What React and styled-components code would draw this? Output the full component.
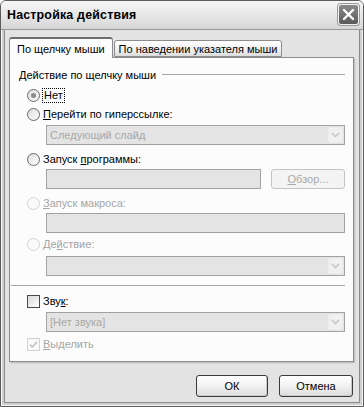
import React from "react";
import styled, { createGlobalStyle } from "styled-components";

const Global = createGlobalStyle`
  html, body { margin: 0; padding: 0; background: #fff; }
  body { font-family: "Liberation Sans", Arial, sans-serif; font-size: 11px; color: #000; }
`;

const Window = styled.div`
  width: 364px;
  height: 407px;
  box-sizing: border-box;
  border: 1px solid #5c5c5c;
  border-radius: 6px 6px 0 0;
  background: #e3e3e3;
  box-shadow: inset 0 0 0 1px #f4f4f4, inset 0 0 0 3px #cfcfcf, inset 0 0 0 4px #8a8a8a;
  display: flex;
  flex-direction: column;
  overflow: hidden;
`;

const TitleBar = styled.div`
  height: 28px;
  flex: none;
  display: flex;
  align-items: center;
  justify-content: space-between;
  padding: 0 4px 0 6px;
  background: linear-gradient(#f6f6f6, #e4e4e4 60%, #d6d6d6);
  border-bottom: 1px solid #9a9a9a;
`;

const Title = styled.div`
  font-weight: bold;
  font-size: 12.4px;
  letter-spacing: 0.2px;
`;

const CloseBox = styled.div`
  width: 21px;
  height: 21px;
  box-sizing: border-box;
  border-radius: 3px;
  border: 1px solid #f0f0f0;
  background: linear-gradient(#8a8a8a, #5a5a5a);
  box-shadow: 0 0 0 1px #9a9a9a;
  display: flex;
  align-items: center;
  justify-content: center;
  margin-top: -2px;
`;

const Body = styled.div`
  flex: 1;
  display: flex;
  flex-direction: column;
  padding: 7px 8px 0 8px;
`;

const Tabs = styled.div`
  display: flex;
  align-items: flex-end;
  height: 20px;
  position: relative;
  z-index: 1;
`;

const Tab = styled.div`
  box-sizing: border-box;
  height: ${p => (p.$active ? "21px" : "17px")};
  margin-bottom: ${p => (p.$active ? "-1px" : "0")};
  padding: 0 ${p => (p.$active ? "7px" : "4px")};
  display: flex;
  align-items: center;
  border: 1px solid #8c8c8c;
  border-bottom: ${p => (p.$active ? "none" : "1px solid #8c8c8c")};
  border-radius: 3px 3px 0 0;
  background: ${p => (p.$active ? "#fcfcfc" : "linear-gradient(#ffffff, #ececec 70%, #dcdcdc)")};
  border-top: ${p => (p.$active ? "2px solid #6e6e6e" : "1px solid #8c8c8c")};
  margin-left: ${p => (p.$active ? "0" : "1px")};
  white-space: nowrap;
`;

const Panel = styled.div`
  box-sizing: border-box;
  height: 305px;
  width: 345px;
  background: #fcfcfc;
  border: 1px solid #8c8c8c;
  box-shadow: 1px 1px 0 #c4c4c4, 2px 2px 0 #d6d6d6;
  padding: 8px 8px 0 9px;
  display: flex;
  flex-direction: column;
`;

const GroupHead = styled.div`
  height: 18px;
  display: flex;
  align-items: center;
  gap: 6px;
  &::after {
    content: "";
    flex: 1;
    height: 1px;
    background: #a6a6a6;
    margin-top: -1px;
  }
`;

const OptionRow = styled.label`
  height: 18px;
  margin-top: ${p => p.$mt || 0}px;
  padding-left: 8px;
  display: flex;
  align-items: center;
  gap: 3px;
  color: ${p => (p.$disabled ? "#a5a5a5" : "#000")};
`;

const Focus = styled.span`
  outline: 1px dotted #000;
  outline-offset: 0;
  padding: 0 1px;
  line-height: 13px;
`;

const FieldRow = styled.div`
  display: flex;
  margin-top: ${p => p.$mt || 0}px;
  padding-left: 27px;
  gap: 11px;
`;

const Field = styled.div`
  box-sizing: border-box;
  height: 20px;
  flex: 1;
  border: 1px solid #a2a2a2;
  background: #e4e4e4;
  display: flex;
  align-items: center;
  justify-content: space-between;
  padding: 0 1px 0 3px;
  color: #a8a8a8;
`;

const DropBtn = styled.div`
  width: 15px;
  height: 16px;
  box-sizing: border-box;
  border: 1px solid #ececec;
  border-radius: 2px;
  background: #f0f0f0;
  display: flex;
  align-items: center;
  justify-content: center;
`;

const BrowseBtn = styled.div`
  box-sizing: border-box;
  width: 74px;
  height: 20px;
  margin-left: -1px;
  border: 1px solid #c4c4c4;
  border-radius: 3px;
  background: #f4f4f4;
  color: #a8a8a8;
  display: flex;
  align-items: center;
  justify-content: center;
`;

const Separator = styled.div`
  height: 1px;
  background: #a6a6a6;
  margin-top: ${p => p.$mt || 0}px;
  margin-left: -8px;
`;

const Footer = styled.div`
  flex: 1;
  display: flex;
  justify-content: flex-end;
  align-items: flex-start;
  padding: 13px 2px 0 0;
  gap: 11px;
`;

const Button = styled.div`
  box-sizing: border-box;
  width: ${p => p.$w}px;
  height: 22px;
  border: 1px solid #3a3a3a;
  border-radius: 3px;
  background: linear-gradient(#ffffff, #f2f2f2 50%, #dcdcdc);
  box-shadow: inset -1px -1px 0 #c8c8c8;
  display: flex;
  align-items: center;
  justify-content: center;
`;

const U = styled.span`
  text-decoration: underline;
  text-underline-offset: 1px;
`;

function Radio({ checked, disabled }) {
  const stroke = disabled ? "#d4d4d4" : "#6a6a6a";
  return (
    <svg width="13" height="13" viewBox="0 0 13 13">
      <defs>
        <linearGradient id="rg" x1="0" y1="0" x2="1" y2="1">
          <stop offset="0" stopColor="#dcdcdc" />
          <stop offset="1" stopColor="#ffffff" />
        </linearGradient>
      </defs>
      <circle cx="6.5" cy="6.5" r="6" fill={disabled ? "#fafafa" : "url(#rg)"} stroke={stroke} />
      {checked && <circle cx="6.5" cy="6.5" r="2.5" fill="#8c8c8c" />}
    </svg>
  );
}

function Check({ checked, disabled }) {
  return (
    <svg width="13" height="13" viewBox="0 0 13 13">
      <defs>
        <linearGradient id="cg" x1="0" y1="0" x2="1" y2="1">
          <stop offset="0" stopColor="#d8d8d8" />
          <stop offset="1" stopColor="#ffffff" />
        </linearGradient>
      </defs>
      <rect x="0.5" y="0.5" width="12" height="12" fill={disabled ? "#fafafa" : "url(#cg)"} stroke={disabled ? "#d0d0d0" : "#4a4a4a"} />
      {checked && <path d="M3 6.5 L5.3 9 L10 3.8" fill="none" stroke="#c4c4c4" strokeWidth="1.8" />}
    </svg>
  );
}

function Chevron() {
  return (
    <svg width="9" height="6" viewBox="0 0 9 6">
      <path d="M1 1 L4.5 4.5 L8 1" fill="none" stroke="#c4c4c4" strokeWidth="1.5" />
    </svg>
  );
}

function Combo({ text }) {
  return (
    <Field>
      <span>{text}</span>
      <DropBtn>
        <Chevron />
      </DropBtn>
    </Field>
  );
}

export default function App() {
  return (
    <>
      <Global />
      <Window>
        <TitleBar>
          <Title>Настройка действия</Title>
          <CloseBox>
            <svg width="13" height="13" viewBox="0 0 13 13">
              <path d="M2 2 L11 11 M11 2 L2 11" stroke="#fff" strokeWidth="2.4" strokeLinecap="round" />
            </svg>
          </CloseBox>
        </TitleBar>
        <Body>
          <Tabs>
            <Tab $active>По щелчку мыши</Tab>
            <Tab>По наведении указателя мыши</Tab>
          </Tabs>
          <Panel>
            <GroupHead>Действие по щелчку мыши</GroupHead>
            <OptionRow $mt={2}>
              <Radio checked />
              <Focus>Нет</Focus>
            </OptionRow>
            <OptionRow $mt={1}>
              <Radio />
              <span><U>П</U>ерейти по гиперссылке:</span>
            </OptionRow>
            <FieldRow $mt={2}>
              <Combo text="Следующий слайд" />
            </FieldRow>
            <OptionRow $mt={5}>
              <Radio />
              <span>Запуск <U>п</U>рограммы:</span>
            </OptionRow>
            <FieldRow $mt={1}>
              <Field />
              <BrowseBtn><span><U>О</U>бзор...</span></BrowseBtn>
            </FieldRow>
            <OptionRow $mt={5} $disabled>
              <Radio disabled />
              <span><U>З</U>апуск макроса:</span>
            </OptionRow>
            <FieldRow $mt={1}>
              <Field />
            </FieldRow>
            <OptionRow $mt={2} $disabled>
              <Radio disabled />
              <span>Де<U>й</U>ствие:</span>
            </OptionRow>
            <FieldRow $mt={3}>
              <Combo />
            </FieldRow>
            <Separator $mt={9} />
            <OptionRow $mt={6}>
              <Check />
              <span>Зву<U>к</U>:</span>
            </OptionRow>
            <FieldRow $mt={2}>
              <Combo text="[Нет звука]" />
            </FieldRow>
            <OptionRow $mt={3} $disabled>
              <Check checked disabled />
              <span><U>В</U>ыделить</span>
            </OptionRow>
          </Panel>
          <Footer>
            <Button $w={72}>ОК</Button>
            <Button $w={74}>Отмена</Button>
          </Footer>
        </Body>
      </Window>
    </>
  );
}
